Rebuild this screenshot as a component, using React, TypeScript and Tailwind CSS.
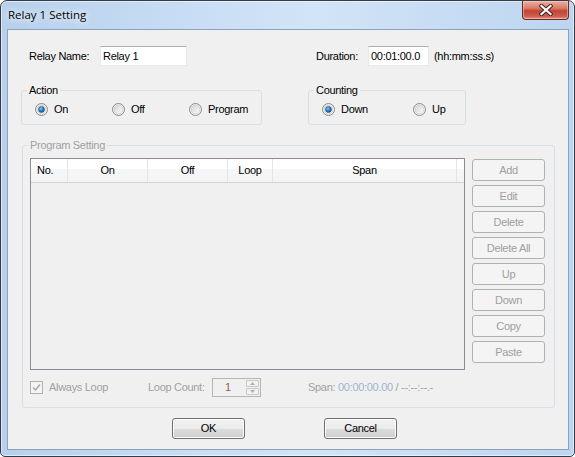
import React from "react";

const uiFont = "font-['Liberation_Sans',Arial,sans-serif] text-[11px] tracking-[-0.3px]";

// Win7-style radio bullet
const Radio = ({ checked }: { checked?: boolean }) => (
  <svg width="13" height="13" viewBox="0 0 13 13" className="shrink-0">
    <defs>
      <linearGradient id="radioFill" x1="0" y1="0" x2="1" y2="1">
        <stop offset="0" stopColor="#d4d4d4" />
        <stop offset="1" stopColor="#fbfbfb" />
      </linearGradient>
      <radialGradient id="radioDot" cx="0.4" cy="0.35" r="0.7">
        <stop offset="0" stopColor="#8ccaf4" />
        <stop offset="0.5" stopColor="#2f7fc4" />
        <stop offset="1" stopColor="#17467a" />
      </radialGradient>
    </defs>
    <circle cx="6.5" cy="6.5" r="6" fill="#f4f4f4" stroke="#8a8a8a" strokeWidth="1" />
    <circle cx="6.5" cy="6.5" r="4.5" fill="url(#radioFill)" stroke="#c2c2c2" strokeWidth="0.6" />
    {checked && <circle cx="6.5" cy="6.5" r="3" fill="url(#radioDot)" stroke="#1d4f82" strokeWidth="0.5" />}
  </svg>
);

const RadioItem = ({ label, checked, width }: { label: string; checked?: boolean; width: string }) => (
  <div className={`flex items-center gap-[6px] ${width}`}>
    <Radio checked={checked} />
    <span className="text-black">{label}</span>
  </div>
);

const SideButton = ({ label }: { label: string }) => (
  <div className="flex h-[22px] w-[73px] items-center justify-center rounded-[3px] border border-[#adb2b5] bg-[#f4f4f4] text-[#a0a0a0]">
    {label}
  </div>
);

const DialogButton = ({ label }: { label: string }) => (
  <div className="flex h-[21px] w-[73px] items-center justify-center rounded-[3px] border border-[#707070] bg-[linear-gradient(to_bottom,#f2f2f2_0%,#ebebeb_50%,#dddddd_50%,#cfcfcf_100%)] text-black shadow-[inset_0_0_0_1px_#fcfcfc]">
    {label}
  </div>
);

const TextBox = ({ value, width }: { value: string; width: string }) => (
  <div className={`flex h-[20px] ${width} items-center border border-[#e3e9ef] border-t-[#abadb3] bg-white pl-[2px] text-black`}>
    {value}
  </div>
);

const columns = [
  { label: "No.", w: "w-[37px]", align: "justify-start pl-[6px]" },
  { label: "On", w: "w-[80px]", align: "justify-center" },
  { label: "Off", w: "w-[80px]", align: "justify-center" },
  { label: "Loop", w: "w-[45px]", align: "justify-center" },
  { label: "Span", w: "w-[184px]", align: "justify-center" },
];

const sideButtons = ["Add", "Edit", "Delete", "Delete All", "Up", "Down", "Copy", "Paste"];

export default function App() {
  return (
    <div className="h-[457px] w-[575px] bg-white">
      <div className="flex h-[457px] w-[575px] flex-col rounded-t-[7px] rounded-b-[5px] border border-[#363c46] bg-[linear-gradient(to_right,#b6d0ec_0%,#c9def5_35%,#d2e4f7_55%,#bcd5f0_100%)] shadow-[inset_0_0_0_1px_rgba(255,255,255,0.55)]">
        {/* title bar */}
        <div className="flex h-[28px] items-start justify-between pl-[7px] pr-[5px]">
          <span className="pt-[6px] font-['Open_Sans','Noto_Sans',sans-serif] text-[11.5px] leading-[16px] text-black [text-shadow:0_0_6px_#ffffff,0_0_10px_#ffffff]">
            Relay 1 Setting
          </span>
          <div className="flex h-[19px] w-[47px] items-center justify-center rounded-b-[4px] border border-t-0 border-[#6b2a24] bg-[linear-gradient(to_bottom,#eab1a2_0%,#d97b68_40%,#c24436_55%,#cc5f4d_85%,#e29b86_100%)] shadow-[inset_0_0_0_1px_rgba(255,220,210,0.45)]">
            <svg width="14" height="12" viewBox="0 0 14 12">
              <path d="M2.5 2 L11.5 10 M11.5 2 L2.5 10" stroke="#47211d" strokeWidth="4.2" strokeLinecap="square" />
              <path d="M2.5 2 L11.5 10 M11.5 2 L2.5 10" stroke="#ffffff" strokeWidth="2.2" strokeLinecap="square" />
            </svg>
          </div>
        </div>

        {/* client area */}
        <div className={`ml-[6px] h-[421px] w-[562px] border border-[#8da1b9] bg-[#f0f0f0] ${uiFont} leading-[13px] text-black`}>
          {/* name / duration */}
          <div className="mt-[16px] flex h-[20px] items-center">
            <span className="ml-[21px] w-[71px]">Relay Name:</span>
            <TextBox value="Relay 1" width="w-[87px]" />
            <span className="ml-[129px] w-[52px]">Duration:</span>
            <TextBox value="00:01:00.0" width="w-[61px]" />
            <span className="ml-[5px]">(hh:mm:ss.s)</span>
          </div>

          {/* action / counting */}
          <div className="mt-[18px] flex items-start">
            <fieldset className="ml-[13px] w-[241px] rounded-[3px] border border-[#d5dfe5] pb-[8px] pt-[6px]">
              <legend className="ml-[5px] px-[2px] leading-[13px]">Action</legend>
              <div className="flex items-center pl-[13px]">
                <RadioItem label="On" checked width="w-[77px]" />
                <RadioItem label="Off" width="w-[77px]" />
                <RadioItem label="Program" width="w-[70px]" />
              </div>
            </fieldset>
            <fieldset className="ml-[46px] w-[158px] rounded-[3px] border border-[#d5dfe5] pb-[8px] pt-[6px]">
              <legend className="ml-[5px] px-[2px] leading-[13px]">Counting</legend>
              <div className="flex items-center pl-[13px]">
                <RadioItem label="Down" checked width="w-[91px]" />
                <RadioItem label="Up" width="w-[40px]" />
              </div>
            </fieldset>
          </div>

          {/* program setting (disabled) */}
          <fieldset className="ml-[14px] mt-[14px] w-[533px] rounded-[3px] border border-[#d5dfe5] pb-[10px] pl-[7px] pt-[6px]">
            <legend className="ml-[-2px] px-[2px] leading-[13px] text-[#a0a0a0]">Program Setting</legend>
            <div className="flex items-start gap-[7px]">
              <div className="flex h-[212px] w-[435px] flex-col border border-[#898c95] bg-[#f0f0f0]">
                <div className="flex h-[24px] border-b border-[#d5d5d5] bg-[linear-gradient(to_bottom,#ffffff_0%,#ffffff_45%,#f6f7f8_45%,#f2f3f5_100%)]">
                  {columns.map((c) => (
                    <div key={c.label} className={`flex ${c.w} ${c.align} items-center border-r border-[#e3e5e8]`}>
                      {c.label}
                    </div>
                  ))}
                  <div className="flex-1" />
                </div>
              </div>
              <div className="mt-[1px] flex w-[73px] flex-col gap-[4px]">
                {sideButtons.map((b) => (
                  <SideButton key={b} label={b} />
                ))}
              </div>
            </div>

            <div className="mt-[8px] flex h-[19px] items-center text-[#a0a0a0]">
              <div className="flex w-[118px] items-center gap-[6px]">
                <div className="flex h-[13px] w-[13px] items-center justify-center border border-[#b1b1b1] bg-[#f4f4f4]">
                  <svg width="9" height="9" viewBox="0 0 9 9">
                    <path d="M1 4.5 L3.5 7 L8 1.5" fill="none" stroke="#a6a6a6" strokeWidth="1.4" />
                  </svg>
                </div>
                <span>Always Loop</span>
              </div>
              <span className="w-[64px]">Loop Count:</span>
              <div className="flex h-[19px] w-[49px] items-center border border-[#b5b5b5] bg-[#f0f0f0]">
                <span className="ml-[12px] flex-1 text-[#8a5c5c]">1</span>
                <div className="mr-[1px] flex h-[15px] w-[13px] flex-col gap-[1px]">
                  <div className="flex flex-1 items-center justify-center rounded-[1px] border border-[#c9c9c9] bg-[#f2f2f2]">
                    <svg width="5" height="3" viewBox="0 0 5 3">
                      <path d="M0 3 L2.5 0 L5 3 Z" fill="#b0b0b0" />
                    </svg>
                  </div>
                  <div className="flex flex-1 items-center justify-center rounded-[1px] border border-[#c9c9c9] bg-[#f2f2f2]">
                    <svg width="5" height="3" viewBox="0 0 5 3">
                      <path d="M0 0 L2.5 3 L5 0 Z" fill="#b0b0b0" />
                    </svg>
                  </div>
                </div>
              </div>
              <span className="ml-[47px]">
                Span: <span className="text-[#9fb4cc]">00:00:00.00</span> / --:--:--.-
              </span>
            </div>
          </fieldset>

          {/* dialog buttons */}
          <div className="mt-[10px] flex">
            <div className="ml-[164px]">
              <DialogButton label="OK" />
            </div>
            <div className="ml-[79px]">
              <DialogButton label="Cancel" />
            </div>
          </div>
        </div>
      </div>
    </div>
  );
}
